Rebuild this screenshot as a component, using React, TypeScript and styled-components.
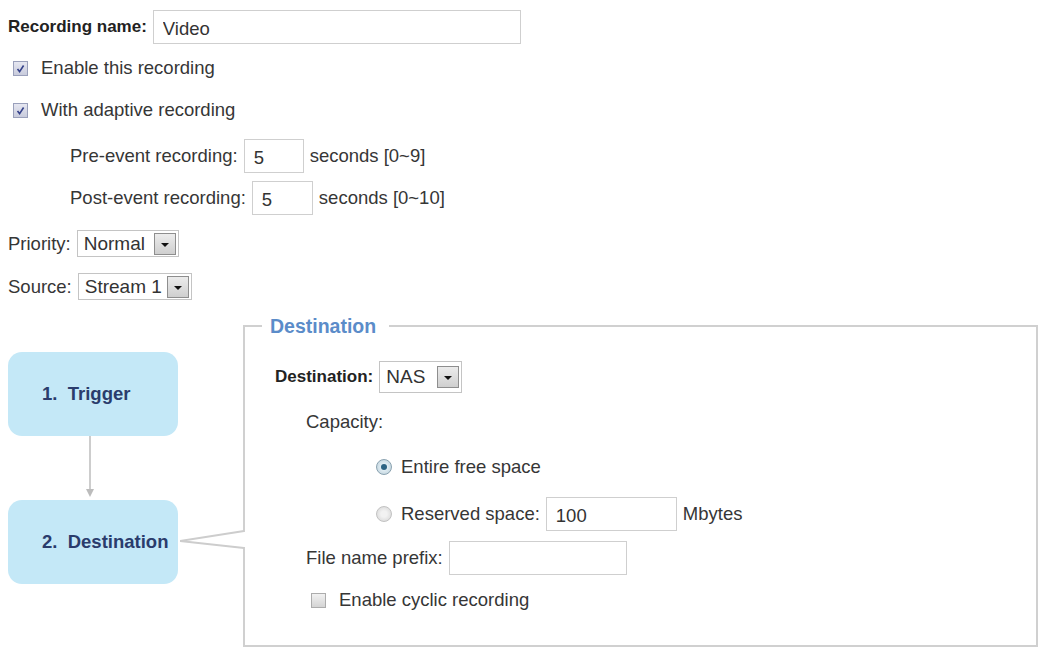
import styled, {createGlobalStyle} from 'styled-components'

const GlobalStyle = createGlobalStyle`
  body {
    margin: 0;
    background: #fff;
    font-family: "Liberation Sans", Arial, sans-serif;
    color: #363636;
  }
`

// layout
const Page = styled.div`
  width: 1042px;
  height: 651px;
  padding-left: 8px;
  box-sizing: border-box;
  overflow: hidden;
`

const Row = styled.div<{$mt: number; $h: number; $indent?: number; $gap?: number}>`
  display: flex;
  align-items: center;
  gap: ${p => (p.$gap ?? 6)}px;
  margin-top: ${p => p.$mt}px;
  height: ${p => p.$h}px;
  padding-left: ${p => p.$indent || 0}px;
`

const Label = styled.span<{$bold?: boolean}>`
  font-size: ${p => (p.$bold ? '17px' : '18.5px')};
  font-weight: ${p => (p.$bold ? 700 : 400)};
  color: ${p => (p.$bold ? '#222' : '#363636')};
  white-space: nowrap;
`

const TextInput = styled.input<{$w: number}>`
  width: ${p => p.$w}px;
  height: 34px;
  box-sizing: border-box;
  border: 1px solid #cfcfcf;
  padding: 4px 9px 0;
  font-family: "Liberation Sans", Arial, sans-serif;
  font-size: 18.5px;
  color: #333;
  background: #fff;
  outline: none;
`

// select
const SelectBox = styled.div<{$w: number; $h: number}>`
  display: flex;
  align-items: center;
  justify-content: space-between;
  width: ${p => p.$w}px;
  height: ${p => p.$h}px;
  box-sizing: border-box;
  border: 1px solid #c4c4c4;
  padding: 0 2px 0 6px;
  font-size: 19px;
  color: #333;
`

const ArrowBtn = styled.span`
  display: flex;
  align-items: center;
  justify-content: center;
  width: 22px;
  height: 22px;
  box-sizing: border-box;
  border: 1px solid #8e8e8e;
  background: linear-gradient(#ececec, #cfcfcf);

  &::after {
    content: '';
    border-left: 4px solid transparent;
    border-right: 4px solid transparent;
    border-top: 4px solid #111;
    margin-top: 2px;
  }
`

function Select({value, w, h}: {value: string; w: number; h: number}) {
  return (
    <SelectBox $w={w} $h={h}>
      <span>{value}</span>
      <ArrowBtn />
    </SelectBox>
  )
}

// checkbox / radio
const CheckBox = styled.span<{$on?: boolean; $ml: number}>`
  display: inline-flex;
  align-items: center;
  justify-content: center;
  width: 15px;
  height: 15px;
  box-sizing: border-box;
  border: 1px solid ${p => (p.$on ? '#9aa0bb' : '#acacac')};
  background: ${p => (p.$on ? 'linear-gradient(#e6e7f1, #c8cbdc)' : 'linear-gradient(#f1f1f1, #d4d4d4)')};
  margin: 0 13px 0 ${p => p.$ml}px;
  flex: none;
`

function Check({on, ml}: {on?: boolean; ml: number}) {
  return (
    <CheckBox $on={on} $ml={ml}>
      {on && (
        <svg width="11" height="11" viewBox="0 0 11 11">
          <path d="M2.5 6 L4.6 8.6 L8.6 2.5" fill="none" stroke="#34418a" strokeWidth="1.6" />
        </svg>
      )}
    </CheckBox>
  )
}

const RadioDot = styled.span<{$on?: boolean; $mr: number}>`
  display: inline-flex;
  align-items: center;
  justify-content: center;
  width: 16px;
  height: 16px;
  box-sizing: border-box;
  border-radius: 50%;
  border: 1px solid ${p => (p.$on ? '#8aa2b0' : '#c2c2c2')};
  background: ${p => (p.$on ? 'radial-gradient(circle, #e2eef4 30%, #b9cdd8)' : 'radial-gradient(circle, #f2f2f2 30%, #d2d2d2)')};
  margin-right: ${p => p.$mr}px;
  flex: none;

  &::after {
    content: '';
    width: 6px;
    height: 6px;
    border-radius: 50%;
    background: ${p => (p.$on ? '#2c6383' : 'transparent')};
  }
`

// flow
const Flow = styled.div`
  position: relative;
  display: flex;
  margin-top: 13px;
`

const Steps = styled.div`
  display: flex;
  flex-direction: column;
  width: 170px;
  padding-top: 39px;
`

const StepBox = styled.div`
  display: flex;
  align-items: center;
  height: 84px;
  padding-left: 34px;
  border-radius: 14px;
  background: #c4e8f7;
  font-size: 18.5px;
  font-weight: 700;
  color: #2a3c6c;
  white-space: pre;
`

const Pointer = styled.svg`
  position: absolute;
  left: 172px;
  top: 212px;
`

const Panel = styled.fieldset`
  margin: 0 0 0 65px;
  padding: 0;
  width: 795px;
  height: 334px;
  box-sizing: border-box;
  border: 2px solid #d0d0d0;
  min-inline-size: 0;
`

const Legend = styled.legend`
  margin-left: 17px;
  padding: 0 13px 0 8px;
  line-height: 26px;
  font-size: 19.5px;
  font-weight: 700;
  color: #5b8cc9;
`

const PanelBody = styled.div`
  padding-left: 30px;
`

export default function App() {
  return (
    <Page>
      <GlobalStyle />
      <Row $mt={10} $h={34}>
        <Label $bold>Recording name:</Label>
        <TextInput $w={368} defaultValue="Video" readOnly />
      </Row>
      <Row $mt={12} $h={24} $gap={0}>
        <Check on ml={5} />
        <Label>Enable this recording</Label>
      </Row>
      <Row $mt={18} $h={24} $gap={0}>
        <Check on ml={5} />
        <Label>With adaptive recording</Label>
      </Row>
      <Row $mt={17} $h={34} $indent={62}>
        <Label>Pre-event recording:</Label>
        <TextInput $w={60} defaultValue="5" readOnly />
        <Label>seconds [0~9]</Label>
      </Row>
      <Row $mt={8} $h={34} $indent={62}>
        <Label>Post-event recording:</Label>
        <TextInput $w={61} defaultValue="5" readOnly />
        <Label>seconds [0~10]</Label>
      </Row>
      <Row $mt={15} $h={27}>
        <Label>Priority:</Label>
        <Select value="Normal" w={102} h={27} />
      </Row>
      <Row $mt={16} $h={27}>
        <Label>Source:</Label>
        <Select value="Stream 1" w={114} h={27} />
      </Row>

      <Flow>
        <Steps>
          <StepBox>{'1.  Trigger'}</StepBox>
          <svg width="170" height="64" viewBox="0 0 170 64">
            <line x1="82" y1="0" x2="82" y2="57" stroke="#bcbcbc" strokeWidth="1.5" />
            <path d="M78 53 L86 53 L82 61 Z" fill="#bcbcbc" />
          </svg>
          <StepBox>{'2.  Destination'}</StepBox>
        </Steps>

        <Pointer width="70" height="32" viewBox="0 0 70 32">
          <rect x="60" y="7" width="8" height="15" fill="#fff" />
          <path d="M64 6 L0 16 L64 23" fill="none" stroke="#cdcdcd" strokeWidth="2" />
        </Pointer>

        <Panel>
          <Legend>Destination</Legend>
          <PanelBody>
            <Row $mt={22} $h={32}>
              <Label $bold>Destination:</Label>
              <Select value="NAS" w={83} h={32} />
            </Row>
            <Row $mt={17} $h={24} $indent={31}>
              <Label>Capacity:</Label>
            </Row>
            <Row $mt={21} $h={24} $indent={101} $gap={0}>
              <RadioDot $on $mr={9} />
              <Label>Entire free space</Label>
            </Row>
            <Row $mt={18} $h={34} $indent={101}>
              <RadioDot $mr={3} />
              <Label>Reserved space:</Label>
              <TextInput $w={131} defaultValue="100" readOnly />
              <Label>Mbytes</Label>
            </Row>
            <Row $mt={10} $h={34} $indent={31}>
              <Label>File name prefix:</Label>
              <TextInput $w={178} readOnly />
            </Row>
            <Row $mt={13} $h={24} $indent={36} $gap={0}>
              <Check ml={0} />
              <Label>Enable cyclic recording</Label>
            </Row>
          </PanelBody>
        </Panel>
      </Flow>
    </Page>
  )
}
